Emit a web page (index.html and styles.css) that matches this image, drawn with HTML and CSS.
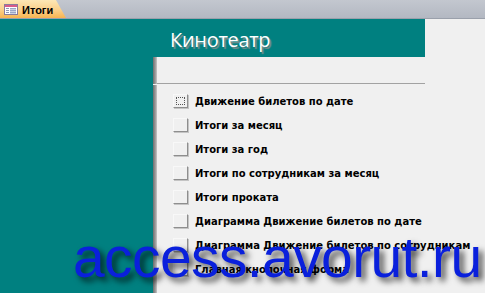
FILE: index.html
```html
<!DOCTYPE html>
<html lang="ru">
<head>
<meta charset="utf-8">
<title>Итоги</title>
<link rel="stylesheet" href="styles.css">
</head>
<body>
<div class="tabbar">
  <div class="tab">
    <svg class="tab-icon" width="14" height="11" viewBox="0 0 14 11">
      <rect x="0.5" y="0.5" width="13" height="10" fill="#ffffff" stroke="#8a7c9c"/>
      <rect x="1" y="1" width="12" height="2" fill="#d85a8a"/>
      <rect x="2" y="4" width="3" height="1" fill="#8f98b8"/>
      <rect x="6" y="4" width="6" height="1.5" fill="#9aa7c8"/>
      <rect x="2" y="6" width="3" height="1" fill="#8f98b8"/>
      <rect x="6" y="6" width="6" height="1.5" fill="#9aa7c8"/>
      <rect x="2" y="8" width="3" height="1" fill="#8f98b8"/>
      <rect x="6" y="8" width="6" height="1.5" fill="#9aa7c8"/>
    </svg>
    <span class="tab-label">Итоги</span>
  </div>
</div>
<div class="main">
  <div class="top-row">
    <div class="outer-teal"></div>
    <div class="form-header"><span class="form-title">Кинотеатр</span></div>
  </div>
  <div class="body-row">
    <div class="outer-teal"></div>
    <div class="form-body">
      <div class="section section-blank">
        <div class="selector"></div>
        <div class="section-content"></div>
      </div>
      <div class="section section-detail">
        <div class="selector"></div>
        <div class="section-content list">
          <div class="item"><span class="btn focused"></span><span class="label">Движение билетов по дате</span></div>
          <div class="item"><span class="btn"></span><span class="label">Итоги за месяц</span></div>
          <div class="item"><span class="btn"></span><span class="label">Итоги за год</span></div>
          <div class="item"><span class="btn"></span><span class="label">Итоги по сотрудникам за месяц</span></div>
          <div class="item"><span class="btn"></span><span class="label">Итоги проката</span></div>
          <div class="item"><span class="btn"></span><span class="label">Диаграмма Движение билетов по дате</span></div>
          <div class="item"><span class="btn"></span><span class="label">Диаграмма Движение билетов по сотрудникам</span></div>
          <div class="item"><span class="btn"></span><span class="label">Главная кнопочная форма</span></div>
        </div>
      </div>
    </div>
  </div>
</div>
<div class="watermark">access.avorut.ru</div>
</body>
</html>
```
FILE: styles.css
```css
* { box-sizing: border-box; }
html, body {
  margin: 0;
  padding: 0;
  width: 485px;
  height: 293px;
  overflow: hidden;
  background: #f0f0f0;
  font-family: "Liberation Sans", Arial, sans-serif;
}
.tabbar {
  height: 19px;
  background: linear-gradient(#c3c7cf, #b3b8c2);
  border-bottom: 1px solid #9aa0ab;
  display: flex;
  align-items: flex-end;
}
.tab {
  height: 18px;
  width: 66px;
  display: flex;
  align-items: center;
  gap: 4px;
  padding-left: 4px;
  background: linear-gradient(#fde7b6, #fbd08a 55%, #f7b451);
  clip-path: polygon(0 0, 56px 0, 66px 100%, 0 100%);
}
.tab-icon { display: block; flex: none; }
.tab-label {
  font-size: 11px;
  font-weight: bold;
  color: #000;
  padding-top: 1px;
}
.main {
  display: flex;
  flex-direction: column;
  height: 274px;
}
.top-row {
  display: flex;
  height: 38px;
  flex: none;
}
.top-row .outer-teal { width: 153px; background: #008080; }
.form-header {
  width: 272px;
  background: #008080;
  padding: 9px 0 0 17px;
}
.form-title {
  font-family: "Open Sans", "Noto Sans", sans-serif;
  font-size: 20px;
  line-height: 24px;
  letter-spacing: -0.3px;
  color: #ffffff;
  text-shadow: 2px 2px 1px #7d8c8c;
}
.body-row {
  display: flex;
  flex: 1;
}
.body-row .outer-teal { width: 153px; background: #008080; flex: none; }
.form-body {
  width: 272px;
  display: flex;
  flex-direction: column;
}
.section { display: flex; }
.selector {
  width: 4px;
  flex: none;
  background: linear-gradient(90deg, #6e6e6e, #9c9c9c 60%, #c8c8c8);
}
.section-blank { height: 27px; }
.section-blank .section-content {
  flex: 1;
  border-bottom: 1px solid #a2a2a2;
}
.section-detail {
  flex: 1;
  margin-top: 1px;
}
.list {
  flex: 1;
  padding: 9px 0 0 16px;
  display: flex;
  flex-direction: column;
  gap: 10px;
}
.item {
  display: flex;
  align-items: center;
  gap: 7px;
  height: 14px;
}
.btn {
  width: 15px;
  height: 14px;
  flex: none;
  background: #f0f0f0;
  border-top: 1px solid #f8f8f8;
  border-left: 1px solid #f8f8f8;
  border-right: 1px solid #8e8e8e;
  border-bottom: 1px solid #8e8e8e;
  box-shadow: 1px 1px 0 #c4c4c4;
  position: relative;
}
.btn.focused::after {
  content: "";
  position: absolute;
  left: 2px; top: 2px; right: 2px; bottom: 2px;
  border: 1px dotted #555;
}
.label {
  font-family: "DejaVu Sans", Verdana, sans-serif;
  font-size: 10px;
  font-weight: bold;
  color: #000;
  white-space: nowrap;
}
.watermark {
  position: absolute;
  left: 73px;
  top: 229px;
  font-family: "Liberation Sans", Arial, sans-serif;
  font-size: 57px;
  line-height: 57px;
  letter-spacing: -0.6px;
  color: #0a20dc;
  text-shadow: 4px 4px 6px rgba(0, 0, 0, 0.75);
  white-space: nowrap;
}
```
